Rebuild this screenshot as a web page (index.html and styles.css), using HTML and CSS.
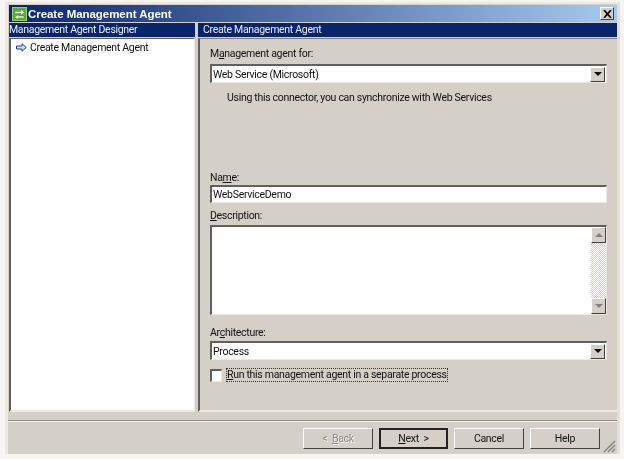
FILE: index.html
```html
<!DOCTYPE html>
<html lang="en">
<head>
<meta charset="utf-8">
<title>Create Management Agent</title>
<link rel="stylesheet" href="styles.css">
</head>
<body>
<div class="window">
  <div class="titlebar">
    <svg class="app-icon" width="15" height="14" viewBox="0 0 15 14"><rect x="0.5" y="0.5" width="14" height="13" fill="#5fa83a" stroke="#8fcf70"/><path d="M3 4.500h6V2.500l3.500 3L9 8.200V6.500H3z" fill="#fff" stroke="#2f7a20" stroke-width="0.4"/><path d="M12 9H6.500V7.500L2.500 10l4 2.800V11H12z" fill="#e8f5df" stroke="#2f7a20" stroke-width="0.4"/></svg>
    <span class="title-text">Create Management Agent</span>
    <div class="close"><svg width="9" height="8" viewBox="0 0 9 8"><path d="M1 0l7 8M8 0L1 8" fill="none" stroke="#000" stroke-width="1.700"/></svg></div>
  </div>
  <div class="panes">
    <div class="left">
      <div class="pane-head">Management Agent Designer</div>
      <div class="tree">
        <div class="tree-item">
          <svg width="11" height="9" viewBox="0 0 11 9"><path d="M0.500 3h5.500V0.800L10.300 4.500 6 8.200V6H0.500z" fill="#cfe0fb" stroke="#1f3f9a"/></svg>
          <span>Create Management Agent</span>
        </div>
      </div>
    </div>
    <div class="right">
      <div class="pane-head">Create Management Agent</div>
      <div class="content">
        <div class="label first">M<u>a</u>nagement agent for:</div>
        <div class="field combo">
          <span class="value">Web Service (Microsoft)</span>
          <span class="drop"><i class="tri"></i></span>
        </div>
        <div class="hint">Using this connector, you can synchronize with Web Services</div>
        <div class="label name-label">Na<u>m</u>e:</div>
        <div class="field text"><span class="value">WebServiceDemo</span></div>
        <div class="label desc-label"><u>D</u>escription:</div>
        <div class="field area">
          <div class="area-text"></div>
          <div class="scroll">
            <span class="sbtn"><i class="tri up"></i></span>
            <span class="track"></span>
            <span class="sbtn"><i class="tri off"></i></span>
          </div>
        </div>
        <div class="label arch-label">Ar<u>c</u>hitecture:</div>
        <div class="field combo arch-combo">
          <span class="value">Process</span>
          <span class="drop"><i class="tri"></i></span>
        </div>
        <div class="check-row">
          <span class="check"></span>
          <span class="check-label"><u>R</u>un this management agent in a separate process</span>
        </div>
      </div>
    </div>
  </div>
  <div class="footer">
    <div class="btn disabled"><span>&lt;&nbsp;&nbsp;<u>B</u>ack</span></div>
    <div class="btn default"><span><u>N</u>ext &nbsp;&gt;</span></div>
    <div class="btn"><span>Cancel</span></div>
    <div class="btn"><span>Help</span></div>
    <svg class="grip" width="13" height="13" viewBox="0 0 13 13"><path d="M12 1L1 12M12 5L5 12M12 9L9 12" stroke="#808080" stroke-width="1.300" fill="none"/></svg>
  </div>
</div>
</body>
</html>
```
FILE: styles.css
```css
* { box-sizing: border-box; }
html, body { margin: 0; height: 100%; }
body {
  background: #f6f5f2;
  font-family: Roboto, "Liberation Sans", Arial, sans-serif;
  font-size: 10.5px;
  letter-spacing: -0.3px;
  color: #111;
  overflow: hidden;
  padding: 2px 0 0 5px;
}
.window {
  width: 615px;
  height: 452px;
  background: #d4d0c8;
  border-top: 2px solid #ece9e3;
  border-left: 3px solid #ece9e3;
  border-right: 3px solid #e4e1da;
  display: flex;
  flex-direction: column;
  filter: blur(0.3px);
}
.titlebar {
  height: 17px;
  margin: 1px 0 0 1px;
  padding-left: 3px;
  flex: none;
  display: flex;
  align-items: center;
  gap: 1px;
  background: linear-gradient(90deg, #0a246a, #a6caf0);
  color: #fff;
  font-weight: bold;
  font-size: 11.500px;
  letter-spacing: -0.05px;
  font-family: "Liberation Sans", Arial, sans-serif;
}
.title-text { flex: 1; }
.close {
  width: 14px;
  height: 13px;
  margin-right: 3px;
  background: #d4d0c8;
  border: 1px solid;
  border-color: #fff #404040 #404040 #fff;
  display: flex;
  align-items: center;
  justify-content: center;
}
.panes {
  height: 389px;
  flex: none;
  margin-top: 1px;
  display: flex;
  gap: 3px;
  padding-left: 1px;
}
.left { width: 186px; display: flex; flex-direction: column; }
.right { flex: 1; display: flex; flex-direction: column; }
.pane-head {
  height: 14px;
  flex: none;
  background: #0a246a;
  color: #e8ecf6;
  line-height: 14px;
  white-space: nowrap;
}
.right .pane-head { padding-left: 5px; }
.tree {
  flex: 1;
  background: #fff;
  margin-top: 1px;
  border-left: 2px solid #606060;
  border-top: 1px solid #606060;
  border-right: 1px solid #ece9e3;
  border-bottom: 2px solid #ece9e3;
  padding: 2px 0 0 5px;
}
.tree-item { display: flex; align-items: center; gap: 3px; height: 13px; white-space: nowrap; }
.content {
  flex: 1;
  margin-top: 1px;
  border-left: 2px solid #606060;
  border-top: 1px solid #808080;
  border-bottom: 2px solid #ece9e3;
  padding: 0 10px 0 10px;
  display: flex;
  flex-direction: column;
}
.label { height: 14px; line-height: 14px; white-space: nowrap; }
.first { margin-top: 8px; }
.name-label { margin-top: 66px; }
.desc-label { margin-top: 6px; }
.arch-label { margin-top: 11px; }
.field {
  width: 397px;
  background: #fff;
  flex: none;
  border-top: 2px solid #606060;
  border-left: 2px solid #606060;
  border-right: 1px solid #ece9e3;
  border-bottom: 1px solid #ece9e3;
  display: flex;
  align-items: center;
  white-space: nowrap;
}
.combo { height: 19px; margin-top: 3px; }
.arch-combo { margin-top: 1px; }
.text { height: 18px; margin-top: 0; }
.area { height: 90px; margin-top: 2px; align-items: stretch; }
.value { flex: 1; padding-left: 1px; }
.drop {
  width: 15px;
  height: 15px;
  margin-right: 1px;
  background: #d4d0c8;
  border: 1px solid;
  border-color: #fff #404040 #404040 #fff;
  display: flex;
  align-items: center;
  justify-content: center;
}
.tri {
  width: 0;
  height: 0;
  border-left: 4px solid transparent;
  border-right: 4px solid transparent;
  border-top: 4px solid #000;
}
.tri.up { border-top: 0; border-bottom: 4px solid #808080; }
.tri.off { border-top-color: #808080; }
.hint { margin: 8px 0 0 17px; height: 14px; line-height: 14px; white-space: nowrap; }
.area-text { flex: 1; }
.scroll { width: 15px; display: flex; flex-direction: column; }
.sbtn {
  height: 16px;
  flex: none;
  background: #d4d0c8;
  border: 1px solid;
  border-color: #fff #404040 #404040 #fff;
  display: flex;
  align-items: center;
  justify-content: center;
}
.track { flex: 1; background: repeating-conic-gradient(#d4d0c8 0 25%, #fff 0 50%) 0 0 / 2px 2px; }
.check-row { display: flex; align-items: center; margin-top: 8px; height: 14px; }
.check {
  width: 12px;
  height: 13px;
  background: #fff;
  border-top: 2px solid #606060;
  border-left: 2px solid #606060;
  border-right: 1px solid #ece9e3;
  border-bottom: 1px solid #ece9e3;
}
.check-label { margin-left: 4px; padding: 0 1px; outline: 1px dotted #333; outline-offset: -1px; line-height: 14px; white-space: nowrap; }
.footer {
  flex: 1;
  margin-top: 8px;
  border-top: 1px solid #8f8c85;
  box-shadow: inset 0 1px 0 #f4f3ef;
  padding: 7px 0 0 295px;
  display: flex;
  gap: 6px;
  position: relative;
  align-items: flex-start;
}
.btn {
  width: 70px;
  height: 21px;
  background: #d4d0c8;
  border: 1px solid;
  border-color: #fff #404040 #404040 #fff;
  display: flex;
  align-items: center;
  justify-content: center;
  white-space: nowrap;
}
.btn.disabled { color: #908d86; text-shadow: 1px 1px 0 #fff; }
.btn.default { width: 69px; border: 2px solid #222; }
.grip { position: absolute; right: 1px; bottom: 1px; }
```
